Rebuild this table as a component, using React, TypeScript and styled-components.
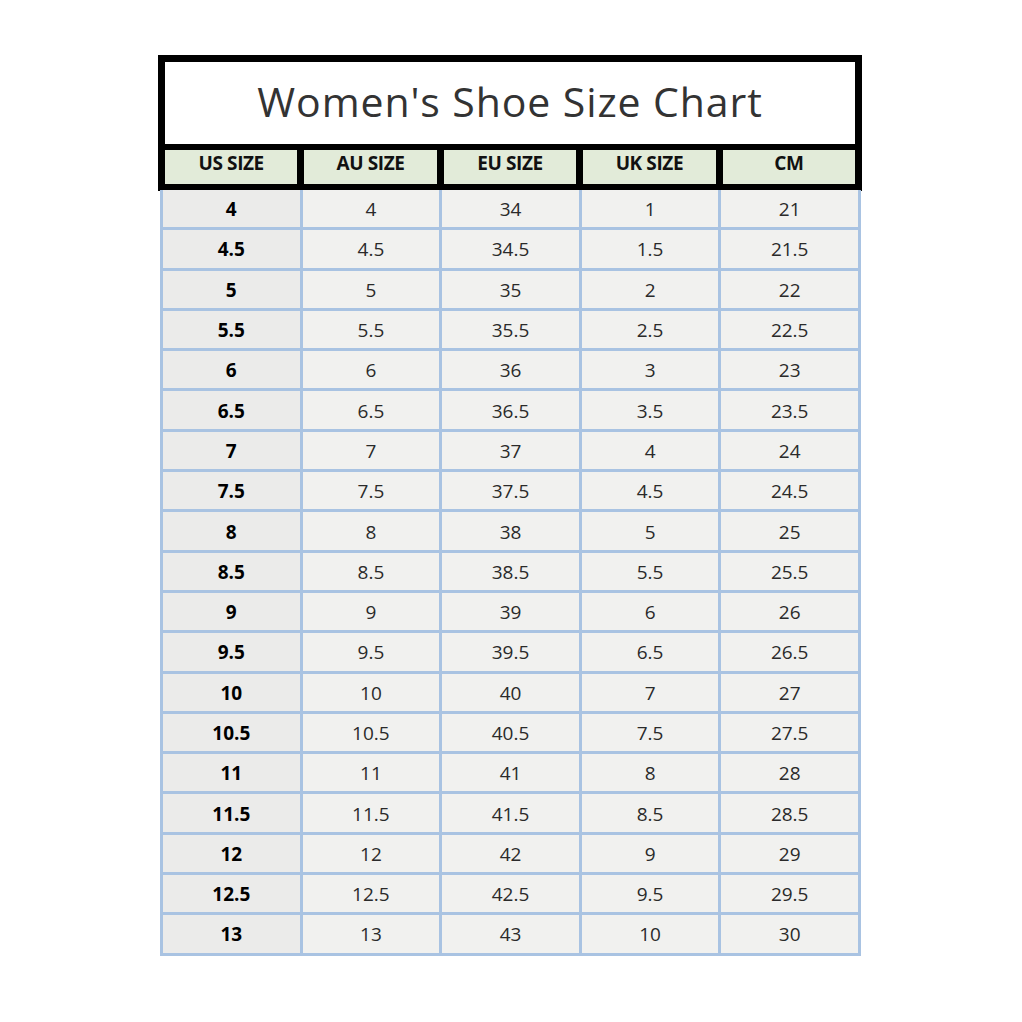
import React from "react";
import styled, { createGlobalStyle } from "styled-components";

const Global = createGlobalStyle`
  html, body { margin: 0; padding: 0; background: #ffffff; }
  body { font-family: "Open Sans", "Noto Sans", sans-serif; }
`;

const Page = styled.div`
  width: 1022px;
  height: 1022px;
  padding: 55px 0 0 158px;
  box-sizing: border-box;
  background: #ffffff;
`;

const Chart = styled.div`
  width: 704px;
  display: flex;
  flex-direction: column;
`;

const HeadBox = styled.div`
  border: 7px solid #000;
  background: #000;
  display: flex;
  flex-direction: column;
  gap: 6px;
`;

const Title = styled.h1`
  margin: 0;
  height: 82px;
  background: #fff;
  display: flex;
  align-items: center;
  justify-content: center;
  font-family: "Open Sans", sans-serif;
  font-weight: 400;
  font-size: 41px;
  color: #333333;
  letter-spacing: 0.9px;
  padding-bottom: 4px;
  box-sizing: border-box;
`;

const HeaderRow = styled.div`
  display: grid;
  grid-template-columns: repeat(5, 1fr);
  gap: 7px;
  height: 34px;
`;

const HeaderCell = styled.div`
  background: #e2ebd9;
  display: flex;
  align-items: center;
  justify-content: center;
  font-family: "Open Sans", sans-serif;
  font-weight: 700;
  font-size: 19px;
  letter-spacing: -0.4px;
  color: #111;
  padding-bottom: 8px;
  box-sizing: border-box;
`;

const Body = styled.div`
  width: 701px;
  margin-left: 2px;
  margin-top: -1px;
  background: #a9c3e2;
  display: grid;
  grid-template-columns: repeat(5, 1fr);
  grid-auto-rows: 37.3px;
  gap: 3px;
  padding: 0 3px 3px 3px;
  box-sizing: border-box;
`;

const Cell = styled.div<{ $first?: boolean }>`
  background: ${(p) => (p.$first ? "#ebebea" : "#f1f1ef")};
  display: flex;
  align-items: center;
  justify-content: center;
  font-family: "Open Sans", sans-serif;
  font-size: 19px;
  font-weight: ${(p) => (p.$first ? 700 : 400)};
  color: ${(p) => (p.$first ? "#000" : "#2a2a2a")};
  padding-top: 1px;
  box-sizing: border-box;
`;

const headers = ["US SIZE", "AU SIZE", "EU SIZE", "UK SIZE", "CM"];

const rows: string[][] = [];
for (let i = 0; i < 19; i++) {
  const us = 4 + i * 0.5;
  const eu = 34 + i * 0.5;
  const uk = 1 + i * 0.5;
  const cm = 21 + i * 0.5;
  rows.push([String(us), String(us), String(eu), String(uk), String(cm)]);
}

export default function App() {
  return (
    <>
      <Global />
      <Page>
        <Chart>
          <HeadBox>
            <Title>Women's Shoe Size Chart</Title>
            <HeaderRow>
              {headers.map((h) => (
                <HeaderCell key={h}>{h}</HeaderCell>
              ))}
            </HeaderRow>
          </HeadBox>
          <Body>
            {rows.map((r, ri) =>
              r.map((v, ci) => (
                <Cell key={`${ri}-${ci}`} $first={ci === 0}>
                  {v}
                </Cell>
              ))
            )}
          </Body>
        </Chart>
      </Page>
    </>
  );
}
